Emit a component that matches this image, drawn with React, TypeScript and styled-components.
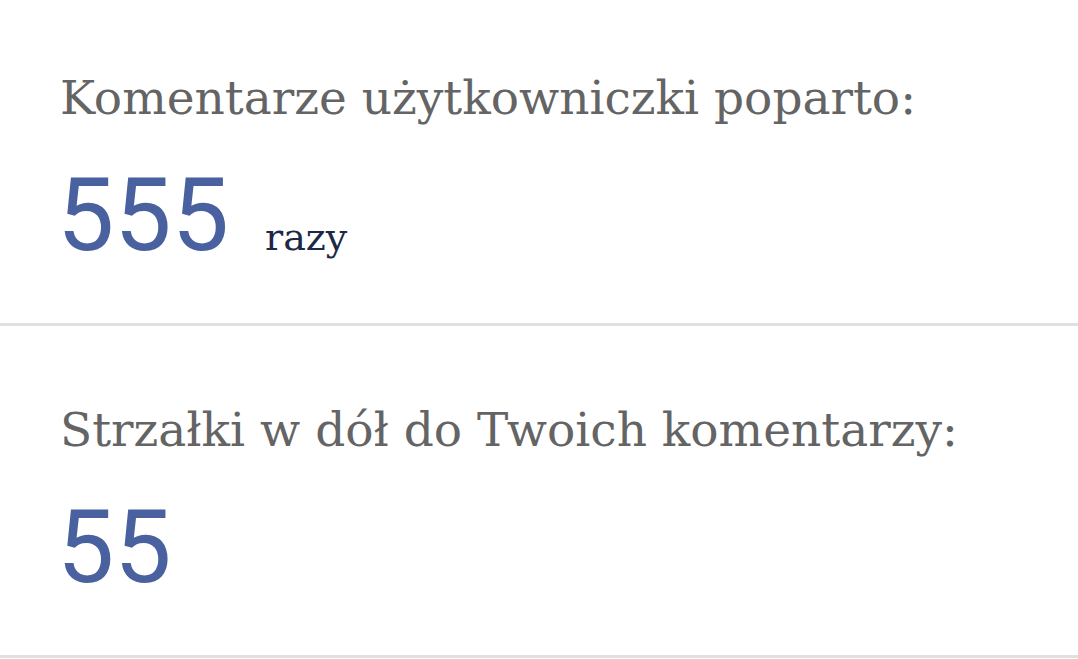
import React from "react";
import styled, { createGlobalStyle } from "styled-components";

const Global = createGlobalStyle`
  html, body { margin: 0; padding: 0; background: #ffffff; }
  body { width: 1078px; height: 659px; overflow: hidden; }
`;

const Page = styled.div`
  display: flex;
  flex-direction: column;
  width: 1078px;
`;

const Section = styled.section<{ $top: number; $height: number }>`
  display: flex;
  flex-direction: column;
  padding: ${(p) => p.$top}px 60px 0 60px;
  height: ${(p) => p.$height - p.$top}px;
  border-bottom: 3px solid #e0e0e0;
  box-sizing: content-box;
`;

const Label = styled.div`
  font-family: "DejaVu Serif", serif;
  font-size: 47px;
  line-height: 52px;
  color: #646464;
  white-space: nowrap;
`;

const ValueRow = styled.div`
  display: flex;
  align-items: baseline;
  gap: 36px;
  margin-top: 36px;
`;

const Value = styled.span`
  font-family: Roboto, sans-serif;
  font-size: 102px;
  line-height: 110px;
  color: #4a61a0;
  margin-left: -3px;
`;

const Unit = styled.span`
  font-family: "DejaVu Serif", serif;
  font-size: 38px;
  color: #1d2847;
`;

export default function App() {
  return (
    <Page>
      <Global />
      <Section $top={72} $height={323}>
        <Label>Komentarze użytkowniczki poparto:</Label>
        <ValueRow>
          <Value>555</Value>
          <Unit>razy</Unit>
        </ValueRow>
      </Section>
      <Section $top={78} $height={329}>
        <Label>Strzałki w dół do Twoich komentarzy:</Label>
        <ValueRow>
          <Value>55</Value>
        </ValueRow>
      </Section>
    </Page>
  );
}
